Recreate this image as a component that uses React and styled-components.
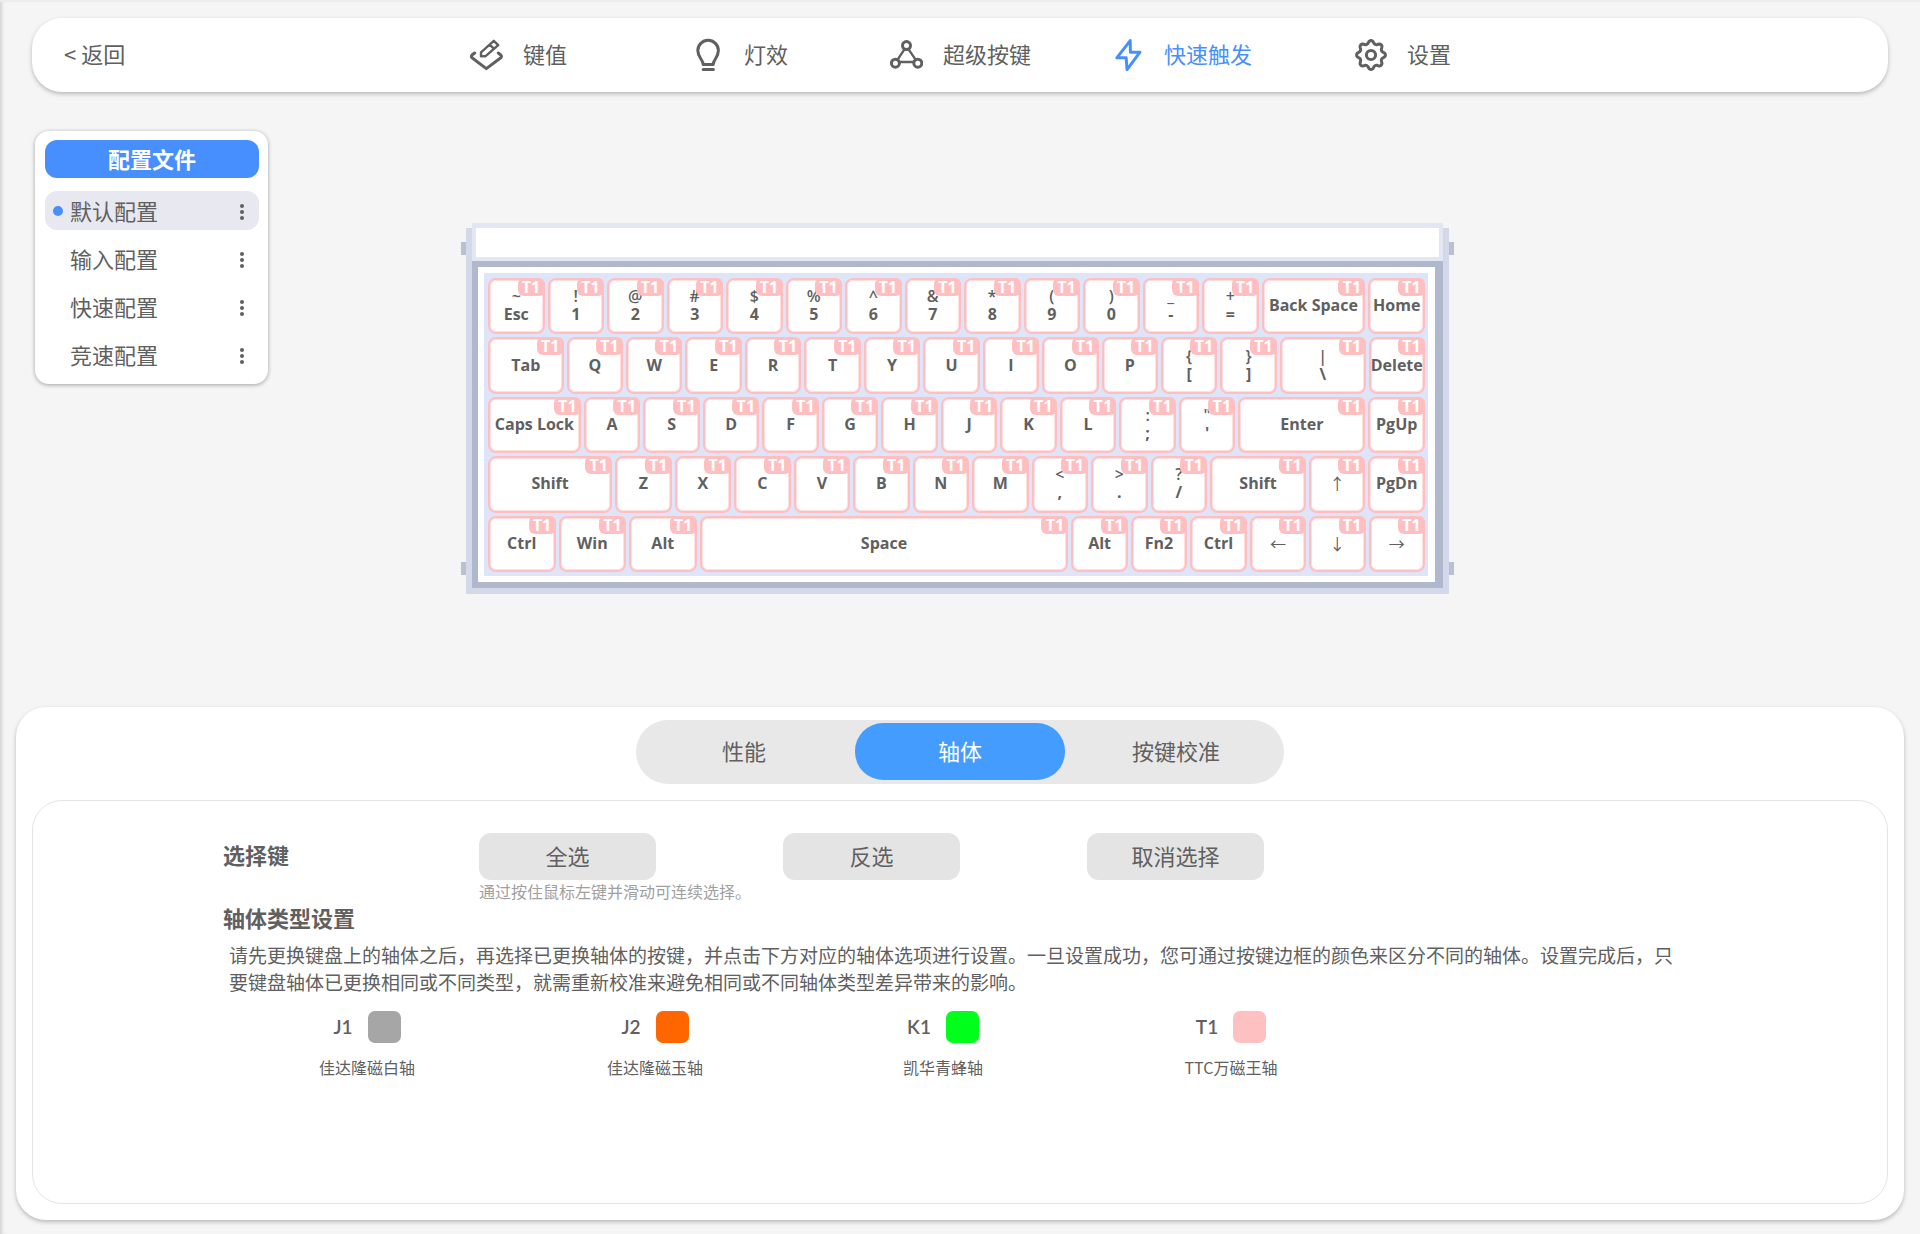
import React, { useState } from 'react';
import styled, { createGlobalStyle } from 'styled-components';

const GlobalStyle = createGlobalStyle`
  * {
    box-sizing: border-box;
  }

  body {
    margin: 0;
    background: #f5f5f5;
    color: #606060;
    font-family: "Noto Sans CJK SC", sans-serif;
    font-size: 22px;
  }

  button {
    margin: 0;
    padding: 0;
    border: none;
    background: none;
    color: inherit;
    font: inherit;
    cursor: pointer;
  }
`;

const Page = styled.div`
  display: flex;
  flex-direction: column;
  min-height: 100vh;
  padding: 16px 0 14px;
  border-top: 2px solid #ececec;
  box-shadow: inset 4px 0 4px -3px rgba(0, 0, 0, 0.2);
`;

const Header = styled.header`
  display: grid;
  grid-template-columns: 1fr auto 1fr;
  align-items: center;
  height: 74px;
  margin: 0 32px;
  padding: 0 32px;
  border-radius: 30px;
  background: #fff;
  box-shadow: 0 2px 4px rgba(0, 0, 0, 0.25);
`;

const BackButton = styled.button`
  justify-self: start;
  padding-bottom: 4px;
  line-height: 32px;
`;

const Nav = styled.nav`
  display: grid;
  grid-template-columns: repeat(5, 221px);
`;

const NavItem = styled.button`
  display: flex;
  align-items: center;
  justify-content: center;
  gap: 20px;
  color: ${(props) => (props.$active ? '#478fff' : 'inherit')};

  svg {
    flex: none;
  }
`;

const NavLabel = styled.span`
  padding-bottom: 4px;
  line-height: 32px;
`;

const Main = styled.main`
  flex: 1;
  display: grid;
  grid-template-columns: 233px 1fr 233px;
  align-items: start;
  padding: 39px 40px 39px 35px;
`;

const ProfileCard = styled.aside`
  display: flex;
  flex-direction: column;
  gap: 9px;
  padding: 9px 9px 10px 10px;
  border-radius: 14px;
  background: #fff;
  box-shadow: 0 1px 4px rgba(0, 0, 0, 0.35);
`;

const ProfileTitle = styled.h2`
  margin: 0 0 4px;
  padding-bottom: 2px;
  border-radius: 12px;
  background: #478fff;
  color: #fff;
  font-size: 22px;
  font-weight: 700;
  line-height: 36px;
  text-align: center;
`;

const ProfileRow = styled.div`
  display: flex;
  align-items: center;
  height: 39px;
  padding: 0 8px;
  border-radius: 12px;
  background: ${(props) => (props.$active ? '#e8e8f1' : 'transparent')};
`;

const ActiveDot = styled.span`
  width: 10px;
  height: 10px;
  margin-right: 7px;
  border-radius: 50%;
  background: ${(props) => (props.$active ? '#478fff' : 'transparent')};
`;

const ProfileName = styled.button`
  flex: 1;
  padding-bottom: 2px;
  line-height: 36px;
  text-align: left;
`;

const MoreButton = styled.button`
  display: flex;
  flex-direction: column;
  align-items: center;
  gap: 2px;
  width: 18px;
  padding-top: 2px;

  span {
    width: 4px;
    height: 4px;
    border-radius: 50%;
    background: #606060;
  }
`;

const KeyboardWrap = styled.section`
  display: flex;
  justify-content: center;
  padding-top: 92px;
`;

const PegColumn = styled.div`
  display: flex;
  flex-direction: column;
  justify-content: space-between;
  padding: 19px 0;
`;

const Peg = styled.span`
  width: 5px;
  height: 13px;
  background: #b9c0d3;
`;

const KeyboardCase = styled.div`
  width: 983px;
  padding: 0 6px 6px;
  background: linear-gradient(transparent 5px, #d3d9e8 5px);
`;

const TopBar = styled.div`
  height: 38px;
  border: 4px solid #e3e7f4;
  border-top-width: 5px;
  background: #fff;
`;

const Frame = styled.div`
  padding: 6px 7px 6px 6px;
  border: 6px solid #b0b8cd;
  border-right-width: 8px;
  background: #fff;
`;

const Deck = styled.div`
  display: grid;
  grid-template-rows: repeat(5, 1fr);
  gap: 3px;
  height: 303px;
  padding: 5px 3px 4px 4px;
  background: #dfe5f9;
`;

const KeyRow = styled.div`
  display: flex;
  gap: 3px;
`;

const Key = styled.button`
  position: relative;
  flex: ${(props) => props.$size} 1 ${(props) => props.$size}px;
  min-width: 0;
  display: flex;
  flex-direction: column;
  align-items: center;
  justify-content: center;
  padding-bottom: 2px;
  border: 2px solid #ffbfc1;
  border-radius: 8px;
  background: #fff;
  box-shadow: inset 0 0 0 1px #ffe0e1;
  font-family: "Open Sans", "Noto Sans", "Noto Sans CJK SC", sans-serif;
  font-size: 16px;
  font-weight: 700;
  line-height: 18px;
  white-space: nowrap;
`;

const Shifted = styled.span`
  font-weight: 600;
`;

const Arrow = styled.span`
  font-family: "Noto Sans CJK SC", sans-serif;
  font-weight: 400;
`;

const KeyBadge = styled.span`
  position: absolute;
  top: -2px;
  right: -2px;
  width: 27px;
  border-radius: 6px;
  background: #ffbfc1;
  color: #fff;
`;

const Panel = styled.section`
  display: flex;
  flex-direction: column;
  align-items: center;
  gap: 16px;
  margin: 0 16px;
  padding: 13px 16px 16px;
  border-radius: 30px;
  background: #fff;
  box-shadow: 0 2px 4px rgba(0, 0, 0, 0.25);
`;

const Tabs = styled.div`
  display: grid;
  grid-template-columns: repeat(3, 216px);
  height: 64px;
  padding: 3px 0 4px;
  border-radius: 32px;
  background: #e8e8e8;
`;

const Tab = styled.button`
  margin: 0 3px;
  padding-bottom: 4px;
  border-radius: 28px;
  background: ${(props) => (props.$active ? '#449cff' : 'transparent')};
  color: ${(props) => (props.$active ? '#fff' : 'inherit')};
`;

const TabBody = styled.div`
  align-self: stretch;
  min-height: 404px;
  padding: 32px 190px;
  border: 1px solid #e4e4e4;
  border-radius: 30px;
`;

const SelectRow = styled.div`
  display: grid;
  grid-template-columns: 256px repeat(3, 304px);
  align-items: center;
`;

const SectionTitle = styled.h3`
  margin: 0;
  padding-bottom: 6px;
  font-size: 22px;
  font-weight: 700;
  line-height: 26px;
`;

const SelectButton = styled.button`
  width: 177px;
  height: 47px;
  padding-bottom: 4px;
  border-radius: 12px;
  background: #e4e4e4;
`;

const Hint = styled.p`
  margin: 0 0 2px 256px;
  color: #a0a0a0;
  font-size: 16px;
  line-height: 22px;
`;

const Description = styled.p`
  margin: 5px 6px 16px;
  font-size: 19px;
  line-height: 27px;
`;

const SwitchList = styled.div`
  display: grid;
  grid-template-columns: repeat(4, 288px);
`;

const SwitchOption = styled.button`
  display: flex;
  flex-direction: column;
  align-items: center;
  gap: 12px;
`;

const SwitchCode = styled.span`
  display: flex;
  align-items: center;
  gap: 15px;
  font-family: Lato, "Noto Sans CJK SC", sans-serif;
  font-size: 19px;
  font-weight: 600;
  line-height: 32px;
`;

const Swatch = styled.span`
  width: 33px;
  height: 32px;
  border-radius: 7px;
  background: ${(props) => props.$color};
`;

const SwitchName = styled.span`
  font-size: 16px;
  line-height: 24px;
`;

const Icon = ({ children }) => (
  <svg
    width="34"
    height="34"
    viewBox="0 0 34 34"
    fill="none"
    stroke="currentColor"
    strokeWidth="3"
    strokeLinecap="round"
    strokeLinejoin="round"
    aria-hidden="true"
  >
    {children}
  </svg>
);

// Outline with eight soft teeth around the centre
const gearOutline = () => {
  const points = [];
  for (let i = 0; i < 96; i += 1) {
    const angle = (i / 96) * Math.PI * 2;
    const wave = Math.cos(angle * 8);
    const radius = 12.9 + 1.5 * Math.sign(wave) * Math.abs(wave) ** 0.7;
    points.push(`${(18 + radius * Math.sin(angle)).toFixed(2)} ${(17 - radius * Math.cos(angle)).toFixed(2)}`);
  }
  return `M${points.join('L')}Z`;
};

const KeymapIcon = () => (
  <Icon>
    <path d="M5.6 15 L3 17 Q1.6 18.4 3 19.8 L17.3 30.6 L31.8 19.8 Q33 18.4 31.8 17 L29.3 15" />
    <path strokeWidth="2.4" d="M12 18.2 V14.4 L24.8 2.8 L29.2 7.2 L16.6 18.2 Z M20.8 6.6 L25 10.8" />
  </Icon>
);

const LightIcon = () => (
  <Icon>
    <path d="M13.2 26.4 C13.2 21.8 7.8 19.6 7.8 12.6 A10.3 10.3 0 0 1 28.4 12.6 C28.4 19.6 23.2 21.8 23.2 26.4 Z" />
    <path d="M13.2 31.4 H23.4" />
  </Icon>
);

const SuperKeyIcon = () => (
  <Icon>
    <circle cx="17.5" cy="7.6" r="4" />
    <circle cx="6.4" cy="25.2" r="4" />
    <circle cx="28.8" cy="25.2" r="4" />
    <path strokeWidth="2.4" d="M15.4 11.4 L8.6 21.6 M19.6 11.4 L26.6 21.6 M10.6 24 H24.6" />
  </Icon>
);

const BoltIcon = () => (
  <Icon>
    <path d="M20.2 2.6 L6.8 19.8 H16.2 L17 31.6 L30 14.2 H20.4 Z" />
  </Icon>
);

const GearIcon = () => (
  <Icon>
    <path d={gearOutline()} />
    <circle cx="18" cy="17" r="4.6" />
  </Icon>
);

const navItems = [
  { label: '键值', icon: KeymapIcon },
  { label: '灯效', icon: LightIcon },
  { label: '超级按键', icon: SuperKeyIcon },
  { label: '快速触发', icon: BoltIcon },
  { label: '设置', icon: GearIcon },
];

const profiles = ['默认配置', '输入配置', '快速配置', '竞速配置'];

// A key is a label, or [label, size], or [label, size, shifted label]
const UNIT = 56;
const keyRows = [
  [
    ['Esc', UNIT, '~'], ['1', UNIT, '!'], ['2', UNIT, '@'], ['3', UNIT, '#'], ['4', UNIT, '$'],
    ['5', UNIT, '%'], ['6', UNIT, '^'], ['7', UNIT, '&'], ['8', UNIT, '*'], ['9', UNIT, '('],
    ['0', UNIT, ')'], ['-', UNIT, '_'], ['=', UNIT, '+'], ['Back Space', 103], 'Home',
  ],
  [
    ['Tab', 75], 'Q', 'W', 'E', 'R', 'T', 'Y', 'U', 'I', 'O', 'P',
    ['[', UNIT, '{'], [']', UNIT, '}'], ['\\', 85, '|'], 'Delete',
  ],
  [
    ['Caps Lock', 92], 'A', 'S', 'D', 'F', 'G', 'H', 'J', 'K', 'L',
    [';', UNIT, ':'], ["'", UNIT, '"'], ['Enter', 126], 'PgUp',
  ],
  [
    ['Shift', 123], 'Z', 'X', 'C', 'V', 'B', 'N', 'M',
    [',', UNIT, '<'], ['.', UNIT, '>'], ['/', UNIT, '?'], ['Shift', 95], '↑', 'PgDn',
  ],
  [
    ['Ctrl', 67], ['Win', 67], ['Alt', 67], ['Space', 366], 'Alt', 'Fn2', 'Ctrl', '←', '↓', '→',
  ],
];

const tabs = ['性能', '轴体', '按键校准'];

const selectActions = ['全选', '反选', '取消选择'];

const switchTypes = [
  { code: 'J1', name: '佳达隆磁白轴', color: '#a6a6a6' },
  { code: 'J2', name: '佳达隆磁玉轴', color: '#ff6600' },
  { code: 'K1', name: '凯华青蜂轴', color: '#00ff1a' },
  { code: 'T1', name: 'TTC万磁王轴', color: '#ffc0c1' },
];

const Keyboard = () => (
  <KeyboardWrap>
    <PegColumn>
      <Peg />
      <Peg />
    </PegColumn>
    <KeyboardCase>
      <TopBar />
      <Frame>
        <Deck>
          {keyRows.map((row, rowIndex) => (
            <KeyRow key={rowIndex}>
              {row.map((item, index) => {
                const [label, size = UNIT, shifted] = Array.isArray(item) ? item : [item];
                return (
                  <Key key={index} type="button" $size={size}>
                    {shifted && <Shifted>{shifted}</Shifted>}
                    {'←↑→↓'.includes(label) ? <Arrow>{label}</Arrow> : <span>{label}</span>}
                    <KeyBadge>T1</KeyBadge>
                  </Key>
                );
              })}
            </KeyRow>
          ))}
        </Deck>
      </Frame>
    </KeyboardCase>
    <PegColumn>
      <Peg />
      <Peg />
    </PegColumn>
  </KeyboardWrap>
);

const App = () => {
  const [activeNav, setActiveNav] = useState('快速触发');
  const [activeProfile, setActiveProfile] = useState('默认配置');
  const [activeTab, setActiveTab] = useState('轴体');

  return (
    <>
      <GlobalStyle />
      <Page>
        <Header>
          <BackButton type="button">&lt; 返回</BackButton>
          <Nav>
            {navItems.map(({ label, icon: NavIcon }) => (
              <NavItem
                key={label}
                type="button"
                $active={label === activeNav}
                onClick={() => setActiveNav(label)}
              >
                <NavIcon />
                <NavLabel>{label}</NavLabel>
              </NavItem>
            ))}
          </Nav>
        </Header>

        <Main>
          <ProfileCard>
            <ProfileTitle>配置文件</ProfileTitle>
            {profiles.map((name) => (
              <ProfileRow key={name} $active={name === activeProfile}>
                <ActiveDot $active={name === activeProfile} />
                <ProfileName type="button" onClick={() => setActiveProfile(name)}>
                  {name}
                </ProfileName>
                <MoreButton type="button" aria-label={name}>
                  <span />
                  <span />
                  <span />
                </MoreButton>
              </ProfileRow>
            ))}
          </ProfileCard>
          <Keyboard />
        </Main>

        <Panel>
          <Tabs role="tablist">
            {tabs.map((tab) => (
              <Tab
                key={tab}
                type="button"
                role="tab"
                aria-selected={tab === activeTab}
                $active={tab === activeTab}
                onClick={() => setActiveTab(tab)}
              >
                {tab}
              </Tab>
            ))}
          </Tabs>

          <TabBody>
            <SelectRow>
              <SectionTitle>选择键</SectionTitle>
              {selectActions.map((action) => (
                <SelectButton key={action} type="button">{action}</SelectButton>
              ))}
            </SelectRow>
            <Hint>通过按住鼠标左键并滑动可连续选择。</Hint>
            <SectionTitle>轴体类型设置</SectionTitle>
            <Description>
              请先更换键盘上的轴体之后，再选择已更换轴体的按键，并点击下方对应的轴体选项进行设置。一旦设置成功，您可通过按键边框的颜色来区分不同的轴体。设置完成后，只要键盘轴体已更换相同或不同类型，就需重新校准来避免相同或不同轴体类型差异带来的影响。
            </Description>
            <SwitchList>
              {switchTypes.map(({ code, name, color }) => (
                <SwitchOption key={code} type="button">
                  <SwitchCode>
                    {code}
                    <Swatch $color={color} />
                  </SwitchCode>
                  <SwitchName>{name}</SwitchName>
                </SwitchOption>
              ))}
            </SwitchList>
          </TabBody>
        </Panel>
      </Page>
    </>
  );
};

export default App;
